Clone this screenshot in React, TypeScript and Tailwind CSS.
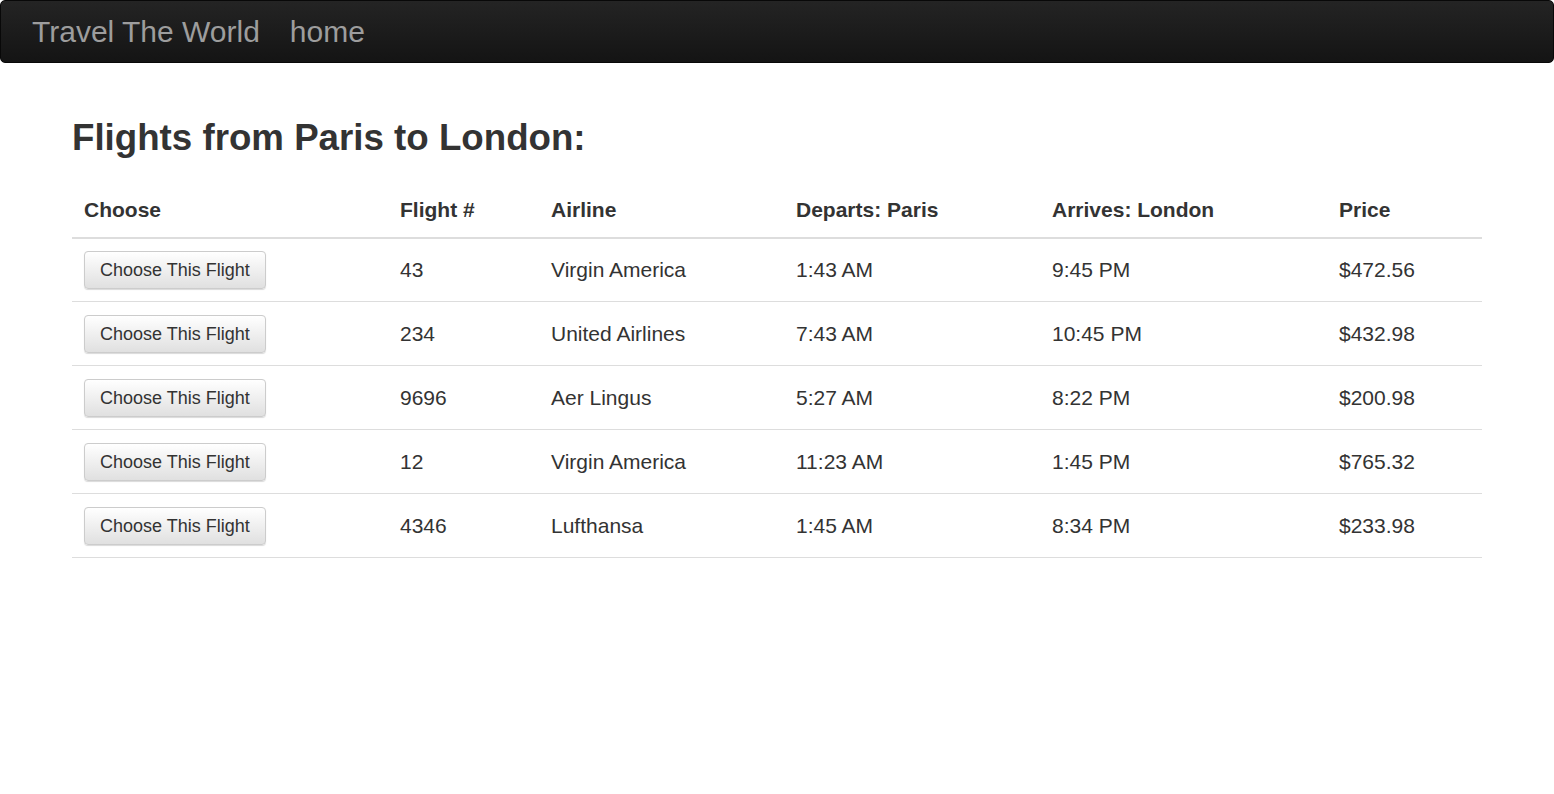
const flights = [
  { num: '43', airline: 'Virgin America', departs: '1:43 AM', arrives: '9:45 PM', price: '$472.56' },
  { num: '234', airline: 'United Airlines', departs: '7:43 AM', arrives: '10:45 PM', price: '$432.98' },
  { num: '9696', airline: 'Aer Lingus', departs: '5:27 AM', arrives: '8:22 PM', price: '$200.98' },
  { num: '12', airline: 'Virgin America', departs: '11:23 AM', arrives: '1:45 PM', price: '$765.32' },
  { num: '4346', airline: 'Lufthansa', departs: '1:45 AM', arrives: '8:34 PM', price: '$233.98' },
];

export default function App() {
  return (
    <div className="min-h-[794px] bg-white font-['Liberation_Sans',Arial,sans-serif] text-[#333]">
      <nav className="h-[63px] flex items-center px-[31px] gap-[30px] rounded-[5px] border border-[#080808] bg-gradient-to-b from-[#242424] to-[#141414]">
        <a className="text-[30px] text-[#9d9d9d] leading-none">Travel The World</a>
        <a className="text-[30px] text-[#9d9d9d] leading-none">home</a>
      </nav>

      <div className="px-[72px]">
        <h1 className="mt-[51px] text-[36.7px] font-bold leading-[48px] text-[#333]">Flights from Paris to London:</h1>

        <table className="mt-[27px] w-[1410px] text-[21px] border-collapse">
          <thead>
            <tr className="border-b-2 border-[#ddd] text-left">
              <th className="w-[316px] px-3 pb-[11px] pt-[5px] font-bold">Choose</th>
              <th className="w-[151px] px-3 pb-[11px] pt-[5px] font-bold">Flight #</th>
              <th className="w-[245px] px-3 pb-[11px] pt-[5px] font-bold">Airline</th>
              <th className="w-[256px] px-3 pb-[11px] pt-[5px] font-bold">Departs: Paris</th>
              <th className="w-[287px] px-3 pb-[11px] pt-[5px] font-bold">Arrives: London</th>
              <th className="px-3 pb-[11px] pt-[5px] font-bold">Price</th>
            </tr>
          </thead>
          <tbody>
            {flights.map((f) => (
              <tr key={f.num} className="border-b border-[#ddd] h-[64px]">
                <td className="px-3 py-0">
                  <button className="h-[38px] px-[15px] pt-[2px] text-[18px] text-[#333] rounded-[4px] border border-[#ccc] bg-gradient-to-b from-white to-[#e0e0e0] shadow-[0_1px_1px_rgba(0,0,0,0.15)]">
                    Choose This Flight
                  </button>
                </td>
                <td className="px-3">{f.num}</td>
                <td className="px-3">{f.airline}</td>
                <td className="px-3">{f.departs}</td>
                <td className="px-3">{f.arrives}</td>
                <td className="px-3">{f.price}</td>
              </tr>
            ))}
          </tbody>
        </table>
      </div>
    </div>
  );
}
